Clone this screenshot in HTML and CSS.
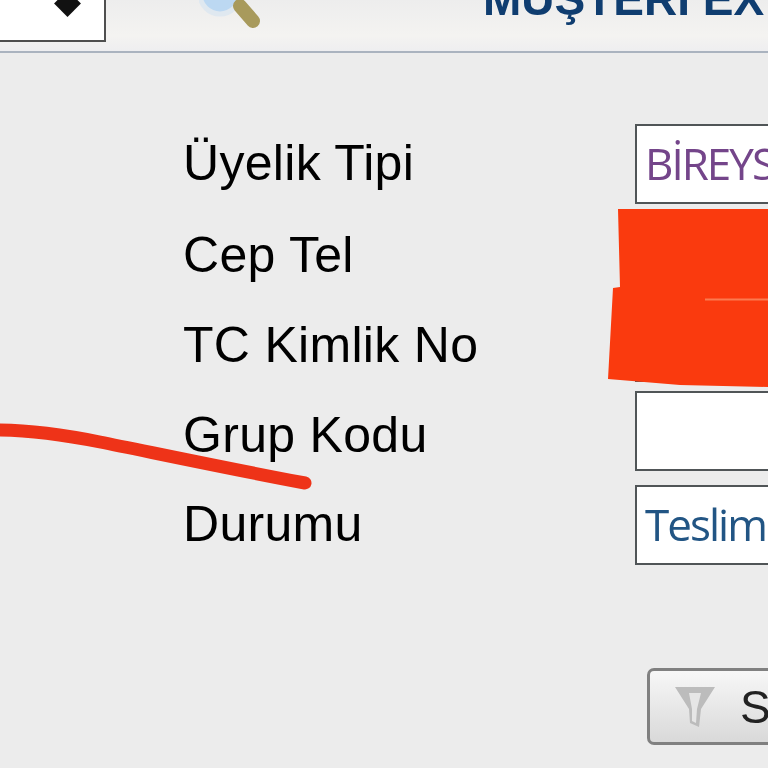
FILE: index.html
```html
<!DOCTYPE html>
<html lang="tr">
<head>
<meta charset="utf-8">
<title>Müşteri</title>
<link rel="stylesheet" href="styles.css">
</head>
<body>
<div class="page">
  <header class="topbar">
    <div class="select"><span class="arrow"></span></div>
    <svg class="search" viewBox="0 0 64 30" aria-hidden="true">
      <circle class="lens" cx="21" cy="-6" r="20"/>
      <path class="handle" d="M41 6 L54 21"/>
    </svg>
    <h1 class="title">MÜŞTERİ EX</h1>
  </header>
  <main class="form">
    <div class="labels">
      <div class="label tall">Üyelik Tipi</div>
      <div class="label tall">Cep Tel</div>
      <div class="label mid">TC Kimlik No</div>
      <div class="label tall">Grup Kodu</div>
      <div class="label short">Durumu</div>
    </div>
    <div class="fields">
      <div class="field purple">BİREYS</div>
      <div class="field"></div>
      <div class="field"></div>
      <div class="field kod"></div>
      <div class="field blue durum">Teslim</div>
      <div class="button">
        <svg class="funnel" viewBox="0 0 42 44" aria-hidden="true">
          <path class="funnel-fill" d="M1 2 H41 L27 24 L25 42 L16 38 L15 24 Z"/>
          <path class="funnel-core" d="M15 8 L27 8 L23 24 L22 38 L18 36 L18 24 Z"/>
        </svg>
        <span class="button-text">S</span>
      </div>
    </div>
  </main>
  <svg class="marks" viewBox="0 0 768 768" aria-hidden="true">
    <path class="block" d="M618 209 L768 209 L768 387 L680 385 L608 379 L613 288 L620 287 Z"/>
    <path class="seam" d="M705 299.500 H768"/>
    <path class="scribble" d="M-5 430 C30 430 60 434 100 442 C150 452 230 469 305 483"/>
  </svg>
</div>
</body>
</html>
```
FILE: styles.css
```css
* { box-sizing: border-box; }
html, body { margin: 0; height: 100%; overflow: hidden; background: #ececec; }
.page {
  position: relative;
  width: 768px;
  height: 768px;
  overflow: hidden;
  background: #ececec;
  font-family: "Liberation Sans", Arial, sans-serif;
  filter: blur(0.5px);
}
.topbar {
  display: flex;
  align-items: flex-end;
  height: 53px;
  border-bottom: 2px solid #aab3bf;
  background: linear-gradient(#ededed, #f4f3f1 70%, #eeeef0);
}
.select {
  display: flex;
  justify-content: center;
  flex: none;
  align-self: flex-start;
  width: 106px;
  height: 42px;
  padding-left: 30px;
  background: #fff;
  border-right: 2px solid #4f4f4f;
  border-bottom: 2px solid #4f4f4f;
}
.arrow {
  width: 19px;
  height: 19px;
  margin-top: -6px;
  background: #111;
  transform: rotate(45deg);
}
.search {
  flex: none;
  align-self: flex-start;
  width: 64px;
  height: 30px;
  margin-left: 93px;
}
.lens { fill: #bcd8f2; stroke: #dfe8f0; stroke-width: 5; }
.handle { stroke: #a89a5c; stroke-width: 14; stroke-linecap: round; fill: none; }
.title {
  flex: none;
  margin: 0 0 29px 220px;
  font-size: 46px;
  line-height: 46px;
  font-weight: 700;
  white-space: nowrap;
  color: #0f3d70;
}
.form { display: flex; }
.labels {
  flex: none;
  width: 635px;
  padding: 64px 0 0 183px;
}
.label {
  font-size: 50px;
  letter-spacing: 0.3px;
  white-space: nowrap;
  color: #000;
}
.tall { line-height: 92px; }
.mid { line-height: 88px; }
.short { line-height: 86px; }
.fields { flex: none; width: 150px; padding-top: 71px; }
.field {
  height: 80px;
  margin-bottom: 9px;
  padding-left: 8px;
  background: #fff;
  border: 2px solid #505557;
  font-family: "Open Sans", sans-serif;
  font-size: 44px;
  line-height: 74px;
  letter-spacing: -2px;
  white-space: nowrap;
  overflow: hidden;
}
.kod { margin-bottom: 14px; }
.durum { margin-bottom: 0; }
.purple { color: #74458a; }
.blue { color: #225584; }
.button {
  display: flex;
  align-items: center;
  gap: 24px;
  width: 140px;
  height: 77px;
  margin: 103px 0 0 12px;
  padding-left: 24px;
  border: 3px solid #808080;
  border-radius: 7px;
  background: linear-gradient(#f7f7f7, #d9d9d9);
}
.funnel { flex: none; width: 42px; height: 44px; }
.funnel-fill { fill: #bcbcbc; }
.funnel-core { fill: #e6e6e6; }
.button-text { font-size: 46px; line-height: 1; color: #222; }
.marks { position: absolute; left: 0; top: 0; width: 768px; height: 768px; }
.block { fill: #fa3a0e; }
.seam { stroke: #fb7a50; stroke-width: 2; fill: none; }
.scribble { stroke: #ee3318; stroke-width: 13; stroke-linecap: round; fill: none; }
```
